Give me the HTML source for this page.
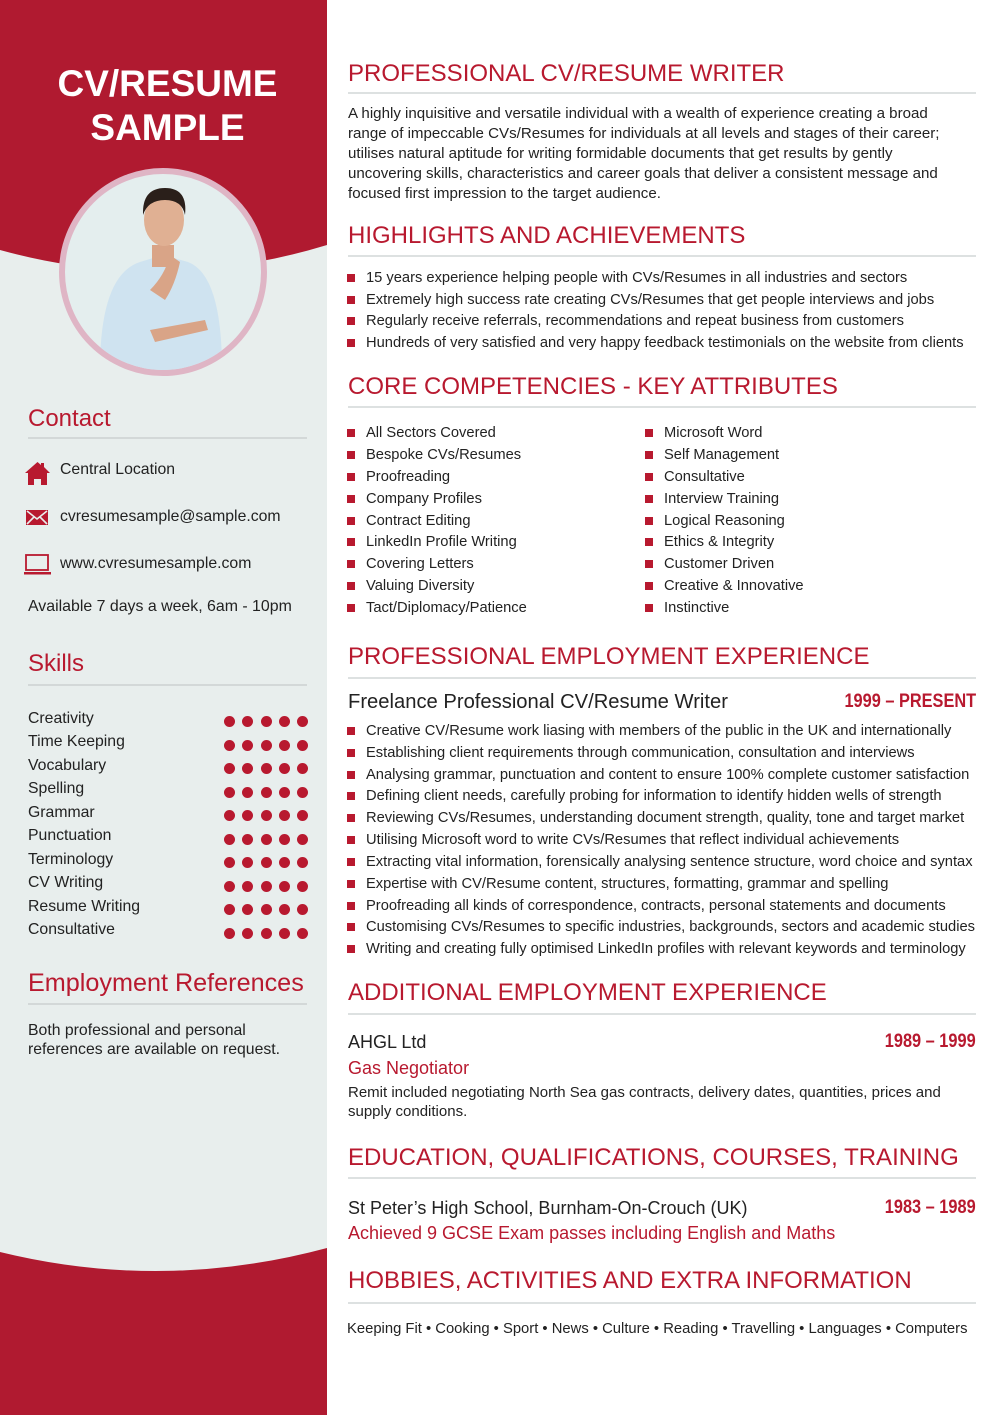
<!DOCTYPE html>
<html><head><meta charset="utf-8"><style>
*{margin:0;padding:0;box-sizing:border-box}
body{width:1000px;height:1415px;position:relative;background:#fff;font-family:"Liberation Sans",sans-serif;color:#222;overflow:hidden}
.t{position:absolute;white-space:nowrap;line-height:20px}
.h{position:absolute;left:348px;color:#b8192f;font-size:24px;line-height:30px;white-space:nowrap}
.rule{position:absolute;left:348px;width:628px;height:2px;background:#dde1e1}
.srule{position:absolute;left:28px;width:279px;height:2px;background:#d3d8d8}
.b{position:absolute;font-size:14.7px;white-space:nowrap;line-height:20px}
.b:before{content:"";position:absolute;left:-19px;top:6px;width:8px;height:8px;background:#b8192f}
.sh{position:absolute;left:28px;color:#b8192f;font-size:24px;line-height:30px;white-space:nowrap}
.sk{position:absolute;left:28px;font-size:15.8px;line-height:20px}
.dots{position:absolute;left:224px;width:90px;height:12px;white-space:nowrap}
.dots i{display:inline-block;width:11px;height:11px;border-radius:50%;background:#b8192f;margin-right:7.3px}
.red{color:#b8192f}
.date{position:absolute;right:24px;color:#b8192f;font-weight:bold;font-size:19px;line-height:24px;transform:scaleX(0.86);transform-origin:right center}
</style></head><body>
<svg width="327" height="1415" style="position:absolute;left:0;top:0">
<rect width="327" height="1415" fill="#e8eeed"/>
<path d="M0 0H327V245Q163 295 0 250Z" fill="#b01a30"/>
<path d="M0 1252Q163 1292 327 1248V1415H0Z" fill="#b01a30"/>
<circle cx="163" cy="272" r="101" fill="#e4eeee" stroke="#dfb5c5" stroke-width="6"/>
<clipPath id="c"><circle cx="163" cy="272" r="98"/></clipPath>
<g clip-path="url(#c)">
<path d="M100 370Q100 275 140 262L163 255L188 262Q222 275 222 370Z" fill="#cfe3f0"/>
<path d="M152 245h22v22h-22z" fill="#d9a487"/>
<ellipse cx="164" cy="220" rx="20" ry="26" fill="#e0b093"/>
<path d="M143 215Q142 188 165 188Q188 188 185 215Q182 200 165 200Q148 200 143 215Z" fill="#2a1f1a"/>
<path d="M150 290Q165 275 170 255L180 262Q175 285 165 300Z" fill="#d9a487"/>
<path d="M150 330L205 320L208 330L155 342Z" fill="#d9a487"/>
</g>
</svg>
<div class="t" style="left:0;width:335px;text-align:center;top:62px;color:#fff;font-weight:bold;font-size:37px;line-height:44px">CV/RESUME<br>SAMPLE</div>

<div class="sh" style="top:404px">Contact</div>
<div class="srule" style="top:437px"></div>
<svg style="position:absolute;left:25px;top:461px" width="25" height="25" viewBox="0 0 25 25"><path d="M12.5 1L0 12h3v12h6v-7h7v7h6V12h3L19 6V2h-3v2Z" fill="#b8192f"/><rect x="9" y="14" width="7" height="4" fill="#b8192f"/></svg>
<div class="t" style="left:60px;top:460px;font-size:15.8px">Central Location</div>
<svg style="position:absolute;left:26px;top:510px" width="22" height="15"><rect width="22" height="15" fill="#b8192f"/><path d="M1 1L11 9L21 1M1 14L8 7M21 14L14 7" stroke="#e8eeed" stroke-width="1.6" fill="none"/></svg>
<div class="t" style="left:60px;top:507px;font-size:15.8px">cvresumesample@sample.com</div>
<svg style="position:absolute;left:24px;top:554px" width="27" height="22"><rect x="2" y="1" width="22" height="15" fill="none" stroke="#b8192f" stroke-width="1.8"/><rect x="0" y="18" width="27" height="2.5" fill="#b8192f"/></svg>
<div class="t" style="left:60px;top:554px;font-size:15.8px">www.cvresumesample.com</div>
<div class="t" style="left:28px;top:597px;font-size:15.9px">Available 7 days a week, 6am - 10pm</div>

<div class="sh" style="top:649px">Skills</div>
<div class="srule" style="top:684px"></div>
<div class="sk" style="top:709px">Creativity</div><div class="dots" style="top:714px"><i></i><i></i><i></i><i></i><i></i></div>
<div class="sk" style="top:732px">Time Keeping</div><div class="dots" style="top:738px"><i></i><i></i><i></i><i></i><i></i></div>
<div class="sk" style="top:756px">Vocabulary</div><div class="dots" style="top:761px"><i></i><i></i><i></i><i></i><i></i></div>
<div class="sk" style="top:779px">Spelling</div><div class="dots" style="top:785px"><i></i><i></i><i></i><i></i><i></i></div>
<div class="sk" style="top:803px">Grammar</div><div class="dots" style="top:808px"><i></i><i></i><i></i><i></i><i></i></div>
<div class="sk" style="top:826px">Punctuation</div><div class="dots" style="top:832px"><i></i><i></i><i></i><i></i><i></i></div>
<div class="sk" style="top:850px">Terminology</div><div class="dots" style="top:855px"><i></i><i></i><i></i><i></i><i></i></div>
<div class="sk" style="top:873px">CV Writing</div><div class="dots" style="top:879px"><i></i><i></i><i></i><i></i><i></i></div>
<div class="sk" style="top:897px">Resume Writing</div><div class="dots" style="top:902px"><i></i><i></i><i></i><i></i><i></i></div>
<div class="sk" style="top:920px">Consultative</div><div class="dots" style="top:926px"><i></i><i></i><i></i><i></i><i></i></div>

<div class="sh" style="top:968px;font-size:25.2px">Employment References</div>
<div class="srule" style="top:1003px"></div>
<div class="t" style="left:28px;top:1021px;font-size:15.8px;line-height:19px">Both professional and personal<br>references are available on request.</div>

<!-- right -->
<div class="h" style="top:59px">PROFESSIONAL CV/RESUME WRITER</div>
<div class="rule" style="top:92px"></div>
<div class="t" style="left:348px;top:104px;font-size:15.1px">A highly inquisitive and versatile individual with a wealth of experience creating a broad<br>range of impeccable CVs/Resumes for individuals at all levels and stages of their career;<br>utilises natural aptitude for writing formidable documents that get results by gently<br>uncovering skills, characteristics and career goals that deliver a consistent message and<br>focused first impression to the target audience.</div>

<div class="h" style="top:221px">HIGHLIGHTS AND ACHIEVEMENTS</div>
<div class="rule" style="top:255px"></div>
<div class="b" style="left:366px;top:268px">15 years experience helping people with CVs/Resumes in all industries and sectors</div>
<div class="b" style="left:366px;top:290px">Extremely high success rate creating CVs/Resumes that get people interviews and jobs</div>
<div class="b" style="left:366px;top:311px">Regularly receive referrals, recommendations and repeat business from customers</div>
<div class="b" style="left:366px;top:333px">Hundreds of very satisfied and very happy feedback testimonials on the website from clients</div>

<div class="h" style="top:372px">CORE COMPETENCIES - KEY ATTRIBUTES</div>
<div class="rule" style="top:406px"></div>
<div class="b" style="left:366px;top:423px">All Sectors Covered</div>
<div class="b" style="left:366px;top:445px">Bespoke CVs/Resumes</div>
<div class="b" style="left:366px;top:467px">Proofreading</div>
<div class="b" style="left:366px;top:489px">Company Profiles</div>
<div class="b" style="left:366px;top:511px">Contract Editing</div>
<div class="b" style="left:366px;top:532px">LinkedIn Profile Writing</div>
<div class="b" style="left:366px;top:554px">Covering Letters</div>
<div class="b" style="left:366px;top:576px">Valuing Diversity</div>
<div class="b" style="left:366px;top:598px">Tact/Diplomacy/Patience</div>
<div class="b" style="left:664px;top:423px">Microsoft Word</div>
<div class="b" style="left:664px;top:445px">Self Management</div>
<div class="b" style="left:664px;top:467px">Consultative</div>
<div class="b" style="left:664px;top:489px">Interview Training</div>
<div class="b" style="left:664px;top:511px">Logical Reasoning</div>
<div class="b" style="left:664px;top:532px">Ethics &amp; Integrity</div>
<div class="b" style="left:664px;top:554px">Customer Driven</div>
<div class="b" style="left:664px;top:576px">Creative &amp; Innovative</div>
<div class="b" style="left:664px;top:598px">Instinctive</div>

<div class="h" style="top:642px">PROFESSIONAL EMPLOYMENT EXPERIENCE</div>
<div class="rule" style="top:677px"></div>
<div class="t" style="left:348px;top:690px;font-size:20.2px;line-height:24px">Freelance Professional CV/Resume Writer</div>
<div class="date" style="top:690px">1999 – PRESENT</div>
<div class="b" style="left:366px;top:721px">Creative CV/Resume work liasing with members of the public in the UK and internationally</div>
<div class="b" style="left:366px;top:743px">Establishing client requirements through communication, consultation and interviews</div>
<div class="b" style="left:366px;top:765px">Analysing grammar, punctuation and content to ensure 100% complete customer satisfaction</div>
<div class="b" style="left:366px;top:786px">Defining client needs, carefully probing for information to identify hidden wells of strength</div>
<div class="b" style="left:366px;top:808px">Reviewing CVs/Resumes, understanding document strength, quality, tone and target market</div>
<div class="b" style="left:366px;top:830px">Utilising Microsoft word to write CVs/Resumes that reflect individual achievements</div>
<div class="b" style="left:366px;top:852px">Extracting vital information, forensically analysing sentence structure, word choice and syntax</div>
<div class="b" style="left:366px;top:874px">Expertise with CV/Resume content, structures, formatting, grammar and spelling</div>
<div class="b" style="left:366px;top:896px">Proofreading all kinds of correspondence, contracts, personal statements and documents</div>
<div class="b" style="left:366px;top:917px">Customising CVs/Resumes to specific industries, backgrounds, sectors and academic studies</div>
<div class="b" style="left:366px;top:939px">Writing and creating fully optimised LinkedIn profiles with relevant keywords and terminology</div>

<div class="h" style="top:978px">ADDITIONAL EMPLOYMENT EXPERIENCE</div>
<div class="rule" style="top:1013px"></div>
<div class="t" style="left:348px;top:1030px;font-size:18px;line-height:24px">AHGL Ltd</div>
<div class="date" style="top:1030px">1989 – 1999</div>
<div class="t red" style="left:348px;top:1056px;font-size:18px;line-height:24px">Gas Negotiator</div>
<div class="t" style="left:348px;top:1083px;font-size:15px;line-height:19px">Remit included negotiating North Sea gas contracts, delivery dates, quantities, prices and<br>supply conditions.</div>

<div class="h" style="top:1143px">EDUCATION, QUALIFICATIONS, COURSES, TRAINING</div>
<div class="rule" style="top:1177px"></div>
<div class="t" style="left:348px;top:1196px;font-size:18px;line-height:24px">St Peter’s High School, Burnham-On-Crouch (UK)</div>
<div class="date" style="top:1196px">1983 – 1989</div>
<div class="t red" style="left:348px;top:1221px;font-size:18px;line-height:24px">Achieved 9 GCSE Exam passes including English and Maths</div>

<div class="h" style="top:1266px">HOBBIES, ACTIVITIES AND EXTRA INFORMATION</div>
<div class="rule" style="top:1302px"></div>
<div class="t" style="left:347px;top:1319px;font-size:14.8px">Keeping Fit • Cooking • Sport • News • Culture • Reading • Travelling • Languages • Computers</div>
</body></html>
